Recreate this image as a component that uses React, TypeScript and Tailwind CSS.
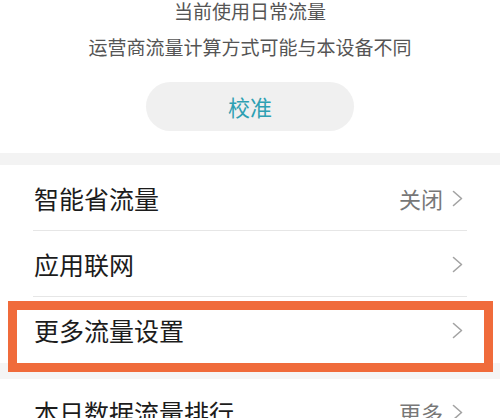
import React from "react";

function Chevron() {
  return (
    <svg width="11" height="17" viewBox="0 0 11 17" fill="none" className="shrink-0">
      <polyline points="1.5,1.5 9.5,8.5 1.5,15.5" stroke="#a3a3a3" strokeWidth="1.6" strokeLinejoin="round" strokeLinecap="round" />
    </svg>
  );
}

function Row({ title, value, divider }: { title: string; value?: string; divider?: boolean }) {
  return (
    <div className="relative flex h-[66px] items-center justify-between pl-[34px] pr-[37px]">
      <span className="text-[25px] leading-none text-[#1c1c1c]">{title}</span>
      <div className="flex items-center gap-[9px]">
        {value && <span className="text-[22px] leading-none text-[#777777]">{value}</span>}
        <Chevron />
      </div>
      {divider && <div className="absolute bottom-0 left-[33px] right-[33px] h-px bg-[#e6e6e6]" />}
    </div>
  );
}

export default function App() {
  return (
    <div
      className="h-[418px] w-[500px] overflow-hidden bg-white"
      style={{ fontFamily: '"Noto Sans CJK SC", "Noto Sans", sans-serif' }}
    >
      <div className="flex flex-col items-center">
        <p className="h-[22px] text-[19px] leading-[22px] text-[#555555]">当前使用日常流量</p>
        <p className="mt-[14px] h-[22px] text-[19px] leading-[22px] text-[#555555]">运营商流量计算方式可能与本设备不同</p>
        <button className="mt-[24px] flex h-[49px] w-[208px] items-center justify-center rounded-full bg-[#f0f0f0] text-[22px] text-[#2ea0b3]">
          校准
        </button>
      </div>

      <div className="mt-[22px] h-[12px] bg-[#f3f3f3]" />

      <Row title="智能省流量" value="关闭" divider />
      <Row title="应用联网" divider />
      <div className="relative">
        <Row title="更多流量设置" />
        <div className="absolute left-[8px] right-[7px] top-[4px] z-10 h-[71px] border-[9px] border-[#f06b3b]" />
      </div>

      <div className="h-[16px] bg-[#f5f5f5]" />

      <Row title="本日数据流量排行" value="更多" />
    </div>
  );
}
